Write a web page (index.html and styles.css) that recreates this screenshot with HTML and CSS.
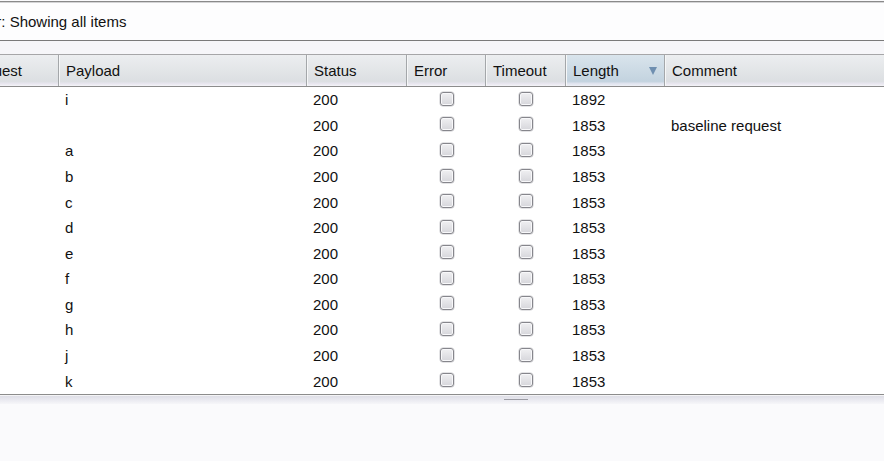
FILE: index.html
```html
<!DOCTYPE html>
<html>
<head>
<meta charset="utf-8">
<link rel="stylesheet" href="styles.css">
</head>
<body>
<div class="filterbar"><span class="filtertext">Filter: Showing all items</span></div>
<div class="gap"></div>
<div class="table">
  <div class="head">
    <div class="th">Request</div>
    <div class="th">Payload</div>
    <div class="th">Status</div>
    <div class="th">Error</div>
    <div class="th">Timeout</div>
    <div class="th sorted">Length<span class="arrow"></span></div>
    <div class="th">Comment</div>
  </div>
  <div class="body">
    <div class="td"></div><div class="td">i</div><div class="td">200</div><div class="td c"><span class="cb"></span></div><div class="td c"><span class="cb"></span></div><div class="td">1892</div><div class="td"></div>
    <div class="td"></div><div class="td"></div><div class="td">200</div><div class="td c"><span class="cb"></span></div><div class="td c"><span class="cb"></span></div><div class="td">1853</div><div class="td">baseline request</div>
    <div class="td"></div><div class="td">a</div><div class="td">200</div><div class="td c"><span class="cb"></span></div><div class="td c"><span class="cb"></span></div><div class="td">1853</div><div class="td"></div>
    <div class="td"></div><div class="td">b</div><div class="td">200</div><div class="td c"><span class="cb"></span></div><div class="td c"><span class="cb"></span></div><div class="td">1853</div><div class="td"></div>
    <div class="td"></div><div class="td">c</div><div class="td">200</div><div class="td c"><span class="cb"></span></div><div class="td c"><span class="cb"></span></div><div class="td">1853</div><div class="td"></div>
    <div class="td"></div><div class="td">d</div><div class="td">200</div><div class="td c"><span class="cb"></span></div><div class="td c"><span class="cb"></span></div><div class="td">1853</div><div class="td"></div>
    <div class="td"></div><div class="td">e</div><div class="td">200</div><div class="td c"><span class="cb"></span></div><div class="td c"><span class="cb"></span></div><div class="td">1853</div><div class="td"></div>
    <div class="td"></div><div class="td">f</div><div class="td">200</div><div class="td c"><span class="cb"></span></div><div class="td c"><span class="cb"></span></div><div class="td">1853</div><div class="td"></div>
    <div class="td"></div><div class="td">g</div><div class="td">200</div><div class="td c"><span class="cb"></span></div><div class="td c"><span class="cb"></span></div><div class="td">1853</div><div class="td"></div>
    <div class="td"></div><div class="td">h</div><div class="td">200</div><div class="td c"><span class="cb"></span></div><div class="td c"><span class="cb"></span></div><div class="td">1853</div><div class="td"></div>
    <div class="td"></div><div class="td">j</div><div class="td">200</div><div class="td c"><span class="cb"></span></div><div class="td c"><span class="cb"></span></div><div class="td">1853</div><div class="td"></div>
    <div class="td"></div><div class="td">k</div><div class="td">200</div><div class="td c"><span class="cb"></span></div><div class="td c"><span class="cb"></span></div><div class="td">1853</div><div class="td"></div>
  </div>
</div>
<div class="splitter"><span class="grip"></span></div>
<div class="bottom"></div>
</body>
</html>
```
FILE: styles.css
```css
html, body {
  margin: 0;
  padding: 0;
  width: 884px;
  height: 461px;
  overflow: hidden;
  background: #fafafc;
  font-family: "Liberation Sans", Arial, sans-serif;
  font-size: 15px;
  color: #111;
}
.filterbar {
  margin-top: 1px;
  height: 38px;
  border-top: 1px solid #8a8a8a;
  border-bottom: 1px solid #7a7a7a;
  background: #fdfdfe;
  box-shadow: inset 0 1px 0 #d4d4d6;
  display: flex;
  align-items: center;
}
.filtertext {
  margin-left: -32px;
  white-space: nowrap;
}
.gap {
  height: 13px;
  background: #f6f6f9;
}
.table {
  margin-left: -42px;
  width: 926px;
  background: #fff;
}
.head, .body {
  display: grid;
  grid-template-columns: 100px 248px 100px 79px 80px 99px 1fr;
}
.head {
  height: 31px;
  border-top: 1px solid #a6a6a8;
  border-bottom: 1px solid #8c8c8c;
  background: linear-gradient(#eceef0, #dcdfe2 85%, #e7e5ee 92%, #f4f4f8);
}
.th {
  display: flex;
  align-items: center;
  padding-left: 7px;
  white-space: nowrap;
  overflow: hidden;
  position: relative;
}
.th + .th {
  border-left: 1px solid #a4a7aa;
  box-shadow: inset 1px 0 0 #f6f7f8;
}
.th:first-child {
  justify-content: flex-end;
  padding-right: 36px;
  padding-left: 0;
}
.th.sorted {
  background: linear-gradient(#d9e4ec, #c3d3df 85%, #dfe3ee 92%, #eef0f6);
}
.arrow {
  position: absolute;
  left: 83px;
  top: 12px;
  width: 0;
  height: 0;
  border-left: 4px solid transparent;
  border-right: 4px solid transparent;
  border-top: 8px solid #6f8fb0;
}
.body {
  grid-auto-rows: 25.58px;
  border-bottom: 1px solid #8c8c8c;
}
.td {
  display: flex;
  align-items: center;
  padding-left: 7px;
  white-space: nowrap;
}
.td.c {
  justify-content: center;
  padding-left: 2px;
}
.cb {
  display: inline-block;
  width: 12px;
  height: 12px;
  margin-top: -2px;
  border: 1px solid #86868c;
  border-radius: 3px;
  background: linear-gradient(#f0f0f2, #d6d6db);
  box-shadow: inset 0 0 0 1px #f8f8fa, 0 0 0 0.5px #c8c8cc;
}
.splitter {
  height: 8px;
  background: linear-gradient(#dedee6, #ececf2 60%, #f6f6f9);
  border-top: 1px solid #f4f4f6;
  display: flex;
  justify-content: center;
}
.grip {
  margin-top: 3px;
  margin-left: 147px;
  width: 24px;
  height: 1px;
  background: #9c9ca4;
}
.bottom {
  height: 60px;
  background: #fafafc;
}
```
